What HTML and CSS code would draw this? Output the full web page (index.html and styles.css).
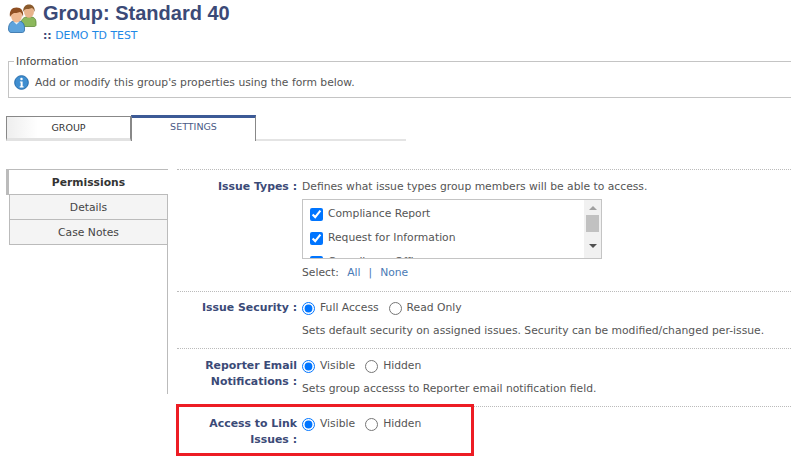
FILE: index.html
```html
<!DOCTYPE html>
<html lang="en">
<head>
<meta charset="utf-8">
<title>Group: Standard 40</title>
<link rel="stylesheet" href="styles.css">
</head>
<body>
<header class="head">
  <svg class="people" width="30" height="30" viewBox="0 0 30 30">
    <path d="M13 20c0-5 3-7 6-7h4c3 0 5 2 5 5v3c0 1-1 1.500-2 1.500H15c-1 0-2-1-2-2.500z" fill="#8cb85c" stroke="#5f8a3a" stroke-width=".8"/>
    <ellipse cx="21" cy="7.500" rx="5" ry="6.300" fill="#e8b48c"/>
    <path d="M15.300 8C14.800 3 17.500.5 21 .5S27.200 3 26.700 8c-.7-2.500-1.700-3.500-2.700-4-2 1-5 1-5.500 1-1 0-2.700 1-3.200 3z" fill="#8a5a2c"/>
    <path d="M.5 25c0-5 2.500-8 6-8h4c4 0 6 3 6 7v2c0 1.500-1 2.500-2 2.500H3C1.500 28.500.5 27 .5 25z" fill="#5da3dc" stroke="#2c6ba5" stroke-width=".8"/>
    <path d="M5.500 17.500l3 3 3-3z" fill="#e6f2fa"/>
    <ellipse cx="8.500" cy="11.500" rx="5.500" ry="7" fill="#eeb890"/>
    <path d="M2 13C1 6.500 4 3.500 8.500 3.500S16 6.500 15 13c-.7-3-1.700-4.500-3-5-2.500 1-5 1-6 1-1 .5-3 1.500-4 4z" fill="#8f4f22"/>
  </svg>
  <div class="head-text">
    <h1 class="title">Group: Standard 40</h1>
    <p class="crumb"><span class="crumb-sep">::</span> <a class="link" href="#">DEMO TD TEST</a></p>
  </div>
</header>

<fieldset class="info">
  <legend class="info-legend">Information</legend>
  <svg class="info-icon" width="15" height="15" viewBox="0 0 16 16">
    <circle cx="8" cy="8" r="7.300" fill="#3f8ed0" stroke="#1f66a8"/>
    <circle cx="8" cy="4.300" r="1.300" fill="#fff"/>
    <path d="M6.300 6.800h2.900v5.200h1v1.200H6.100V12h1V8H6.300z" fill="#fff"/>
  </svg>
  <span>Add or modify this group's properties using the form below.</span>
</fieldset>

<nav class="tabs">
  <a class="tab" href="#">GROUP</a>
  <a class="tab tab-active" href="#">SETTINGS</a>
</nav>

<div class="body">
  <aside class="side">
    <a class="side-item side-active" href="#">Permissions</a>
    <a class="side-item" href="#">Details</a>
    <a class="side-item" href="#">Case Notes</a>
  </aside>
  <main class="form">
    <section class="row row-types">
      <div class="label">Issue Types :</div>
      <div class="value">
        <p class="desc-top">Defines what issue types group members will be able to access.</p>
        <div class="listbox">
          <div class="list-items">
            <label class="list-item"><input type="checkbox" checked> Compliance Report</label>
            <label class="list-item"><input type="checkbox" checked> Request for Information</label>
            <label class="list-item"><input type="checkbox" checked> Compliance Office</label>
          </div>
          <div class="scroll">
            <span class="arrow-up"></span>
            <span class="thumb"></span>
            <span class="arrow-down"></span>
          </div>
        </div>
        <p class="select-line">Select: <a class="link-soft" href="#">All</a><span class="pipe">|</span><a class="link-soft" href="#">None</a></p>
      </div>
    </section>
    <section class="row row-security">
      <div class="label">Issue Security :</div>
      <div class="value">
        <div class="radios">
          <label class="radio"><input type="radio" name="sec" checked> Full Access</label>
          <label class="radio"><input type="radio" name="sec"> Read Only</label>
        </div>
        <p class="desc">Sets default security on assigned issues. Security can be modified/changed per-issue.</p>
      </div>
    </section>
    <section class="row row-reporter">
      <div class="label">Reporter Email Notifications :</div>
      <div class="value">
        <div class="radios">
          <label class="radio"><input type="radio" name="rep" checked> Visible</label>
          <label class="radio"><input type="radio" name="rep"> Hidden</label>
        </div>
        <p class="desc">Sets group accesss to Reporter email notification field.</p>
      </div>
    </section>
    <section class="row row-link">
      <div class="label">Access to Link Issues :</div>
      <div class="value">
        <div class="radios">
          <label class="radio"><input type="radio" name="lnk" checked> Visible</label>
          <label class="radio"><input type="radio" name="lnk"> Hidden</label>
        </div>
      </div>
      <div class="highlight"></div>
    </section>
  </main>
</div>
</body>
</html>
```
FILE: styles.css
```css
* { box-sizing: border-box; }
html, body { margin: 0; height: 462px; overflow: hidden; background: #fff; }
body { font: 10.750px "DejaVu Sans", Verdana, sans-serif; color: #555; }
p, h1 { margin: 0; }
a { text-decoration: none; }

.head { display: flex; height: 55px; padding: 4px 0 0 8px; gap: 5px; }
.people { display: block; }
.title { font: bold 20px/20px "Liberation Sans", Arial, sans-serif; color: #3b4a77; margin-top: -1px; }
.crumb { margin-top: 6px; font-size: 10.900px; line-height: 14px; }
.crumb-sep { color: #3b4a77; font-weight: bold; }
.link { color: #1e88e5; }

.info { margin: 0 0 0 8px; padding: 0 0 0 5px; height: 43px; border: 1px solid #c4c4c4; border-right: 0; display: flex; align-items: center; gap: 6px; }
.info-legend { padding: 0 2px; color: #444; line-height: 13px; }
.info-icon { flex: none; }

.tabs { display: flex; width: 400px; height: 25px; margin: 18px 0 0 6px; border-bottom: 2px solid #e4e4e4; }
.tab { width: 125px; height: 25px; border: 1px solid #888; border-bottom: 3px solid #e2e2e2; text-align: center; font-size: 9.500px; line-height: 21px; color: #333; background: linear-gradient(90deg, #eee, #fff 25%); }
.tab-active { border-top: 3px solid #3c5a96; border-bottom: 0; margin-top: -1px; height: 26px; background: #fff; color: #4a5a86; line-height: 17px; }

.body { display: flex; margin: 28px 0 0 6px; }
.side { width: 162px; height: 225px; border-right: 1px solid #bbb; margin-right: 9px; flex: none; }
.side-item { display: block; height: 25px; margin-left: 3px; border-left: 1px solid #bbb; border-bottom: 1px solid #bbb; background: #f4f4f4; text-align: center; line-height: 26px; color: #444; }
.side-active { height: 26px; margin-left: 0; border-left: 3px solid #bbb; border-top: 1px solid #bbb; background: #fff; font-weight: bold; color: #333; line-height: 25px; margin-right: -1px; position: relative; }

.form { flex: 1; }
.row { position: relative; display: flex; border-top: 1px dotted #bbb; }
.row-types { height: 122px; }
.row-security { height: 57px; }
.row-reporter { height: 58px; }
.row-link { height: 56px; }
.label { width: 120px; text-align: right; font-weight: bold; font-size: 10.900px; line-height: 16px; color: #3b4a77; padding-top: 8px; flex: none; }
.value { margin-left: 5px; padding-top: 8px; flex: 1; min-width: 0; }
.row-types .label, .row-types .value, .row-reporter .label, .row-reporter .value, .row-link .label, .row-link .value { padding-top: 9px; }
.desc-top { line-height: 16px; }
.listbox { display: flex; width: 300px; height: 60px; margin-top: 4px; border: 1px solid #c4c4c4; overflow: hidden; }
.list-items { flex: 1; padding-top: 2px; }
.list-item { display: flex; align-items: center; height: 24px; padding-left: 7px; gap: 5px; white-space: nowrap; line-height: 10px; }
.list-item input { margin: 0; width: 13px; height: 13px; flex: none; }
.scroll { width: 17px; background: #f1f1f1; flex: none; display: flex; flex-direction: column; align-items: center; }
.arrow-up { width: 0; height: 0; margin-top: 6px; border: 4px solid transparent; border-top: 0; border-bottom: 4px solid #a0a0a0; }
.thumb { width: 13px; height: 17px; margin-top: 5px; background: #c1c1c1; }
.arrow-down { width: 0; height: 0; margin-top: 12px; border: 4px solid transparent; border-bottom: 0; border-top: 4px solid #505050; }
.select-line { margin-top: 8px; line-height: 12px; }
.link-soft { color: #4a7ab5; margin-left: 5px; }
.pipe { color: #4a7ab5; margin-left: 8px; margin-right: 3px; }

.radios { display: flex; gap: 10px; line-height: 16px; }
.radio { display: flex; align-items: center; gap: 5px; }
.radio input { margin: 0; width: 13px; height: 13px; flex: none; }
.desc { margin-top: 8px; line-height: 14px; }

.highlight { position: absolute; left: -1px; top: -3px; width: 298px; height: 52px; border: 3px solid #ed1c24; }
```
